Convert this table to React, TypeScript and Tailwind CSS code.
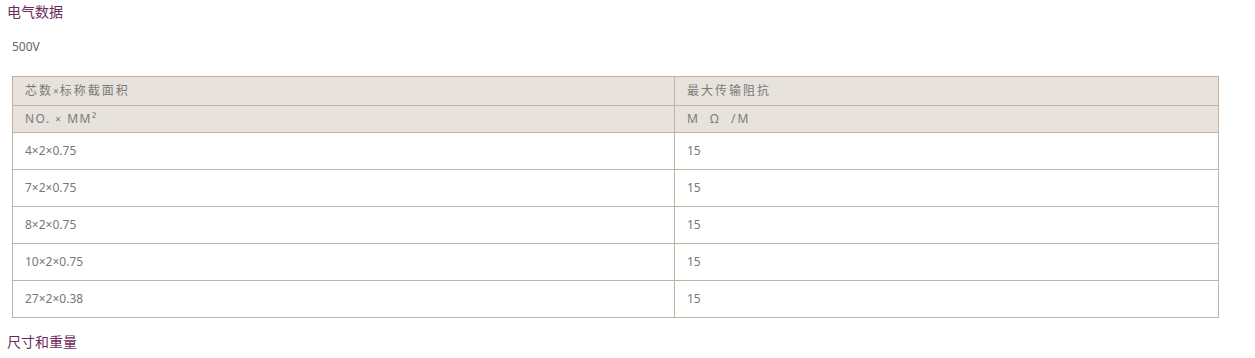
import React from "react";

const rows = [
  ["4×2×0.75", "15"],
  ["7×2×0.75", "15"],
  ["8×2×0.75", "15"],
  ["10×2×0.75", "15"],
  ["27×2×0.38", "15"],
];

export default function App() {
  return (
    <div
      className="bg-white w-[1255px] h-[358px] overflow-hidden"
      style={{ fontFamily: '"Noto Sans", "Noto Sans CJK SC", sans-serif' }}
    >
      <div className="pl-[7px] pt-[1px] text-[14px] leading-[22px] text-[#6b2b5b]">电气数据</div>
      <div className="pl-[12px] pt-[14px] text-[12px] leading-[20px] text-[#666]">500V</div>
      <table className="ml-[12px] mt-[19px] w-[1207px] border-collapse text-[12px] text-[#777]">
        <colgroup>
          <col className="w-[662px]" />
          <col />
        </colgroup>
        <thead>
          <tr className="bg-[#e8e2dc] h-[29px]">
            <td className="border border-[#c0b3a3] pl-[12px] tracking-[2px] text-[#7a7a7a]">芯数<span className="text-[10px] tracking-[1px]">×</span>标称截面积</td>
            <td className="border border-[#c0b3a3] pl-[12px] tracking-[2px] text-[#7a7a7a]">最大传输阻抗</td>
          </tr>
          <tr className="bg-[#e8e2dc] h-[27px]">
            <td className="border border-[#c0b3a3] pl-[12px] tracking-[1.5px] text-[#7a7a7a] whitespace-pre">NO. <span className="text-[10px]">×</span> MM²</td>
            <td className="border border-[#c0b3a3] pl-[12px] tracking-[2px] text-[#7a7a7a] whitespace-pre">M  Ω  /M</td>
          </tr>
        </thead>
        <tbody>
          {rows.map((r, i) => (
            <tr key={i} className="h-[37px]">
              <td className="border border-[#c0b3a3] pl-[12px]">{r[0]}</td>
              <td className="border border-[#c0b3a3] pl-[12px]">{r[1]}</td>
            </tr>
          ))}
        </tbody>
      </table>
      <div className="pl-[7px] pt-[13px] text-[14px] leading-[22px] text-[#6b2b5b]">尺寸和重量</div>
    </div>
  );
}
